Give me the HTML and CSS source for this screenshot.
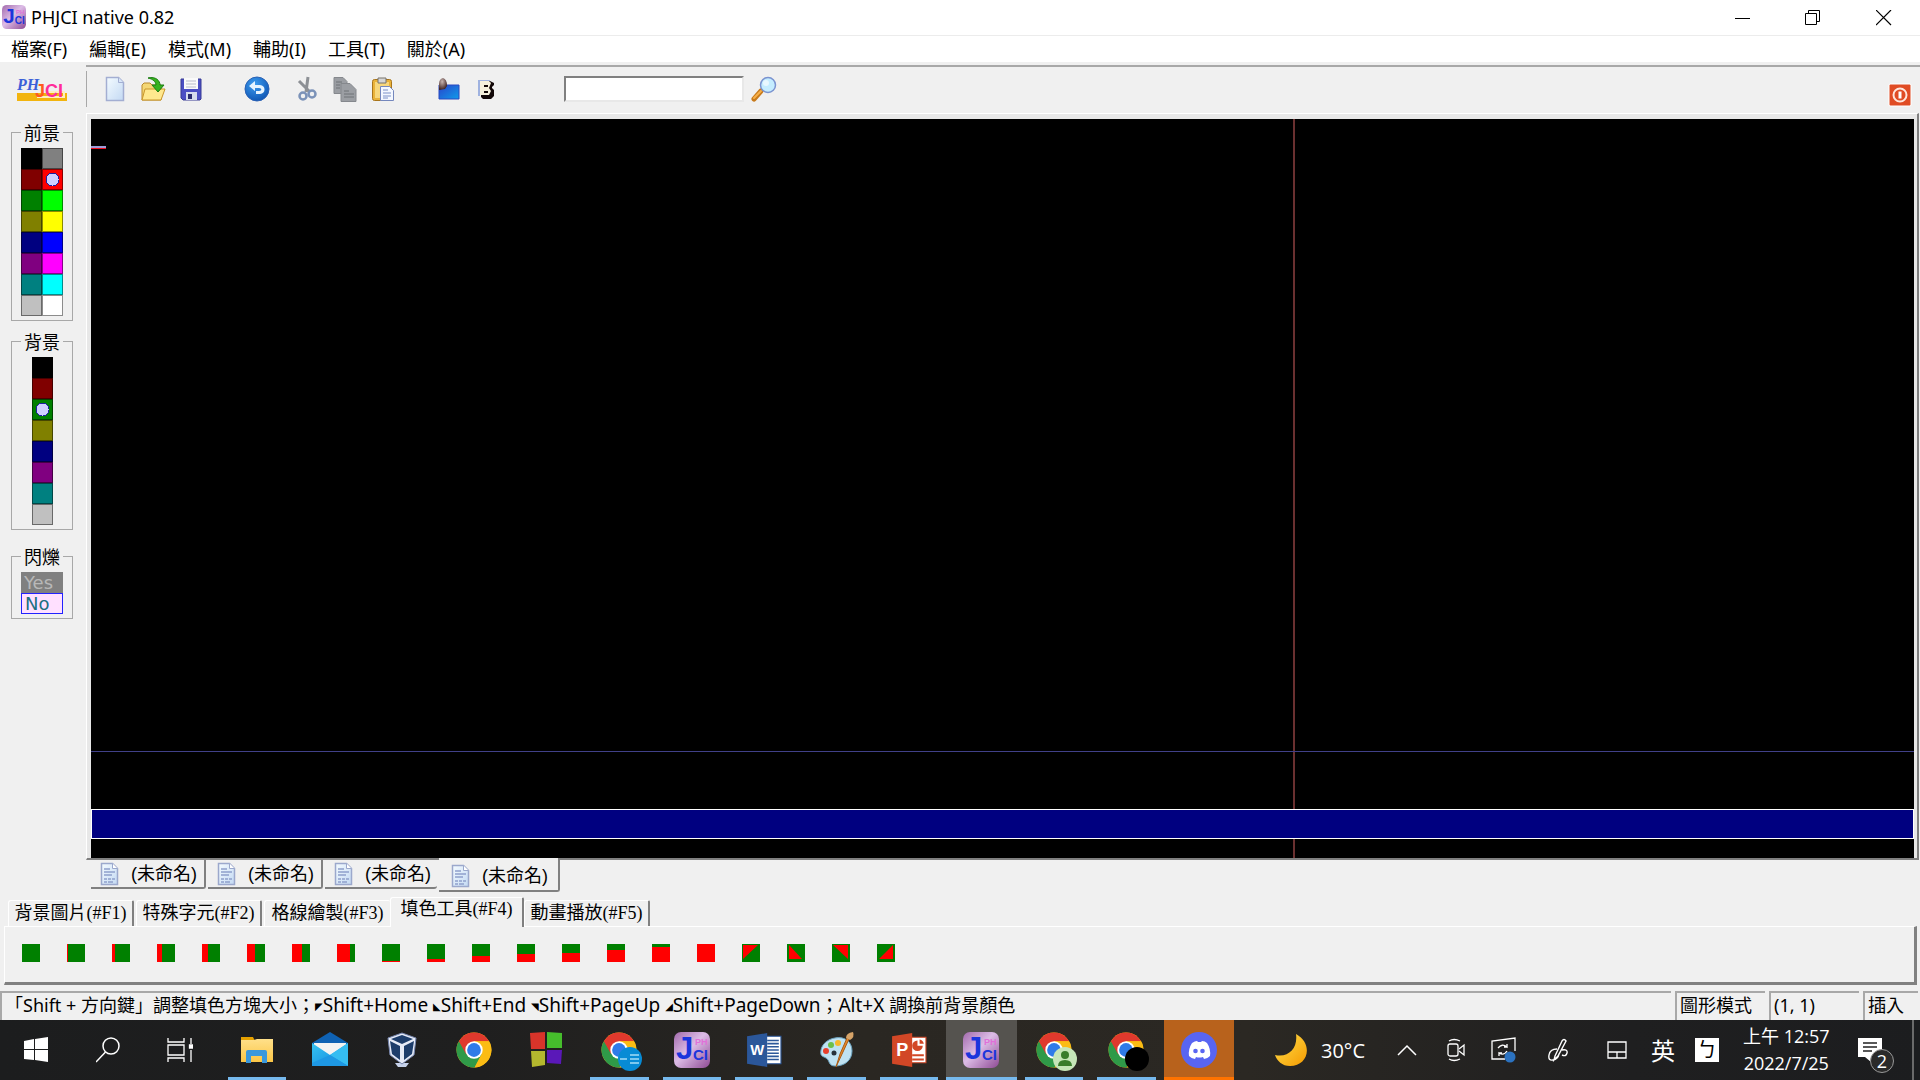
FILE: index.html
```html
<!DOCTYPE html>
<html lang="zh-Hant">
<head>
<meta charset="utf-8">
<title>PHJCI native 0.82</title>
<link rel="stylesheet" href="styles.css">
</head>
<body>
<svg class="defs" aria-hidden="true">
  <defs>
    <linearGradient id="gPurple" x1="0" y1="0" x2="1" y2="1"><stop offset="0" stop-color="#a26aac"/><stop offset=".45" stop-color="#dcbce6"/><stop offset="1" stop-color="#8e4a94"/></linearGradient>
    <linearGradient id="gPaper" x1="0" y1="0" x2="1" y2="1"><stop offset="0" stop-color="#f4fbff"/><stop offset="1" stop-color="#c3d9f3"/></linearGradient>
    <linearGradient id="gBlue" x1="0" y1="0" x2="1" y2="1"><stop offset="0" stop-color="#2a44cc"/><stop offset="1" stop-color="#0e9cea"/></linearGradient>
    <radialGradient id="gUndo" cx=".4" cy=".3" r=".8"><stop offset="0" stop-color="#3d9df0"/><stop offset="1" stop-color="#0a4fae"/></radialGradient>
    <radialGradient id="gBall" cx=".4" cy=".3" r=".7"><stop offset="0" stop-color="#c9b5b0"/><stop offset="1" stop-color="#3c2020"/></radialGradient>
    <linearGradient id="gMoon" x1="0" y1="0" x2="1" y2="1"><stop offset="0" stop-color="#ffe14d"/><stop offset="1" stop-color="#f59a00"/></linearGradient>
    <linearGradient id="gFolder" x1="0" y1="0" x2="0" y2="1"><stop offset="0" stop-color="#ffe08a"/><stop offset="1" stop-color="#fbc646"/></linearGradient>
    <linearGradient id="gMail" x1="0" y1="0" x2="1" y2="1"><stop offset="0" stop-color="#35c3f3"/><stop offset="1" stop-color="#1287dc"/></linearGradient>
  </defs>
  <symbol id="chrome" viewBox="0 0 34 34">
    <circle cx="17" cy="17" r="16.5" fill="#fbbc14"/>
    <path d="M17 17 2.7 8.8A16.5 16.5 0 0 0 17.6 33.5L24.2 21z" fill="#2f9a48"/>
    <path d="M17 17 9.6 21 2.7 8.8A16.5 16.5 0 0 1 31.3 8.8H17z" fill="#e0392d"/>
    <path d="M17 8.8h14.300A16.500 16.500 0 0 1 17.600 33.500L24.200 21z" fill="#fbbc14"/>
    <circle cx="17" cy="17" r="8.200" fill="#fff"/><circle cx="17" cy="17" r="6.500" fill="#2f7be8"/>
  </symbol>
  <symbol id="jci" viewBox="0 0 36 36">
    <rect width="36" height="36" rx="7" fill="url(#gPurple)"/>
    <text x="2" y="27" class="logo-j">J</text><text x="19" y="28" class="logo-ci">CI</text><text x="21" y="13" class="logo-ph">PH</text>
  </symbol>
  <symbol id="doc" viewBox="0 0 20 24">
    <path d="M1.500 1.500h11l5 5v16h-16z" fill="url(#gPaper)" stroke="#9ba8cc" stroke-width="1.500"/>
    <path d="M12.500 1.500v5h5" fill="#fff" stroke="#9ba8cc"/>
    <path d="M4 7h6M4 10h11M4 13h8M4 17h3m1 0h3m1 0h3M4 20h3m1 0h5" stroke="#8fa0cc" stroke-width="1.300"/>
  </symbol>
</svg>

<header class="titlebar">
  <svg class="app-icon" viewBox="0 0 36 36"><use href="#jci"/></svg>
  <h1 class="title">PHJCI native 0.82</h1>
  <button class="win-btn" aria-label="最小化"><svg width="16" height="16"><path d="M0 8.500h15" stroke="#000"/></svg></button>
  <button class="win-btn" aria-label="還原"><svg width="16" height="16" fill="none" stroke="#000"><path d="M.5 3.500h11v11H.5zM3.500 3.500v-3h11v11h-3"/></svg></button>
  <button class="win-btn" aria-label="關閉"><svg width="16" height="16"><path d="M0 0 15 15M15 0 0 15" stroke="#000" stroke-width="1.200"/></svg></button>
</header>

<nav class="menubar">
  <button>檔案(F)</button><button>編輯(E)</button><button>模式(M)</button><button>輔助(I)</button><button>工具(T)</button><button>關於(A)</button>
</nav>

<div class="workspace">
  <aside class="sidebar">
    <svg class="logo" viewBox="0 0 50 25">
      <path d="M0 16h50v8H0z" fill="#f2b40e"/><path d="M30 15h17v5H20" fill="none" stroke="#fdf0c0" stroke-width="2"/>
      <text x="0" y="13" class="logo-script">PH</text>
      <text x="18" y="20" class="logo-word"><tspan fill="#ff5a1e">J</tspan><tspan fill="#ff2d9a">CI</tspan></text>
    </svg>
    <fieldset class="group">
      <legend>前景</legend>
      <div class="swatches two">
        <input type="radio" name="fg" class="c-black" aria-label="黑"><input type="radio" name="fg" class="c-gray" aria-label="灰">
        <input type="radio" name="fg" class="c-maroon" aria-label="暗紅"><input type="radio" name="fg" class="c-red" aria-label="紅" checked>
        <input type="radio" name="fg" class="c-green" aria-label="暗綠"><input type="radio" name="fg" class="c-lime" aria-label="綠">
        <input type="radio" name="fg" class="c-olive" aria-label="暗黃"><input type="radio" name="fg" class="c-yellow" aria-label="黃">
        <input type="radio" name="fg" class="c-navy" aria-label="暗藍"><input type="radio" name="fg" class="c-blue" aria-label="藍">
        <input type="radio" name="fg" class="c-purple" aria-label="暗紫"><input type="radio" name="fg" class="c-magenta" aria-label="紫">
        <input type="radio" name="fg" class="c-teal" aria-label="暗青"><input type="radio" name="fg" class="c-cyan" aria-label="青">
        <input type="radio" name="fg" class="c-silver" aria-label="銀"><input type="radio" name="fg" class="c-white" aria-label="白">
      </div>
    </fieldset>
    <fieldset class="group">
      <legend>背景</legend>
      <div class="swatches">
        <input type="radio" name="bg" class="c-black" aria-label="黑">
        <input type="radio" name="bg" class="c-maroon" aria-label="暗紅">
        <input type="radio" name="bg" class="c-green" aria-label="暗綠" checked>
        <input type="radio" name="bg" class="c-olive" aria-label="暗黃">
        <input type="radio" name="bg" class="c-navy" aria-label="暗藍">
        <input type="radio" name="bg" class="c-purple" aria-label="暗紫">
        <input type="radio" name="bg" class="c-teal" aria-label="暗青">
        <input type="radio" name="bg" class="c-silver" aria-label="銀">
      </div>
    </fieldset>
    <fieldset class="group blink-group">
      <legend>閃爍</legend>
      <div class="blink">
        <button class="blink-yes">Yes</button>
        <button class="blink-no" aria-pressed="true">No</button>
      </div>
    </fieldset>
  </aside>

  <main class="editor">
    <div class="toolbar">
      <button class="tool" aria-label="新檔"><svg viewBox="0 0 26 26"><path d="M4.500 1.500h12l5 5v18h-17z" fill="url(#gPaper)" stroke="#a3aed2" stroke-width="1.500"/><path d="M16.500 1.500v5h5" fill="#d8e6f8" stroke="#a3aed2"/></svg></button>
      <button class="tool" aria-label="開啟"><svg viewBox="0 0 26 26"><path d="M2 24V9l2-2h6l2 2h9v15z" fill="#f4d774" stroke="#b8892a"/><path d="M2 24l3-11h20l-4 11z" fill="#ffe88e" stroke="#c8952a"/><path d="M8 2c8-2 12 3 12 7h4l-6 7-6-7h4c0-3-3-6-8-7z" fill="#35b31e" stroke="#1c7c12"/></svg></button>
      <button class="tool" aria-label="儲存"><svg viewBox="0 0 26 26"><path d="M3 3h20v20l-1 1H5l-2-2z" fill="#4b4fc4" stroke="#383a94"/><path d="M6 2h14v11H6z" fill="#fafafa"/><path d="M8 5h10M8 8h10M8 11h10" stroke="#b9bccb"/><path d="M8 16h11v8H8z" fill="#d6dcec"/><path d="M10 18h4v5h-4z" fill="#2a2c70"/></svg></button>
      <button class="tool undo" aria-label="復原"><svg viewBox="0 0 26 26"><circle cx="13" cy="13" r="12" fill="url(#gUndo)" stroke="#2c62b4"/><path d="M11 5v4h5c6 0 6 9 0 9h-4v-3h3c3 0 3-3 0-3h-4v3l-6-5z" fill="#e6f4ff"/></svg></button>
      <button class="tool cut" aria-label="剪下"><svg viewBox="0 0 26 26" fill="none"><path d="M5 5 16 16M14 1 12 16" stroke="#8d9095" stroke-width="3"/><circle cx="9" cy="20" r="3.500" stroke="#7b92b8" stroke-width="2.500"/><circle cx="18" cy="18" r="3.500" stroke="#7b92b8" stroke-width="2.500"/></svg></button>
      <button class="tool" aria-label="複製"><svg viewBox="0 0 26 26" fill="#9b9ea3" stroke="#85888d"><path d="M2 1.500h9l4 4v12H2z"/><path d="M9 7.500h9l6 6v12H9z"/><path d="M4 6h6M4 9h4M4 12h4M12 15h5M12 18h10M12 21h10" stroke="#6f7277"/></svg></button>
      <button class="tool paste" aria-label="貼上"><svg viewBox="0 0 26 26"><rect x="2.500" y="3.500" width="19" height="21" rx="2" fill="#e9b23a" stroke="#a8751c"/><path d="M5 6h14v16H5z" fill="#f7d77c"/><path d="M8 2h8v5H8z" fill="#d6d6d6" stroke="#77736a"/><path d="M10.500 10.500h9l4 4v10h-13z" fill="#f4f8ff" stroke="#7487bd"/><path d="M13 14h5M13 17h8M13 20h8M13 22h5" stroke="#7d92c8"/></svg></button>
      <button class="tool" aria-label="背景"><svg viewBox="0 0 26 26"><path d="M3 9h20v14H3z" fill="url(#gBlue)" stroke="#2b48c0"/><path d="M3 14V8q0-5 4-6 4 1 4 8l-2 3z" fill="url(#gBall)"/></svg></button>
      <button class="tool" aria-label="粗體"><svg viewBox="0 0 26 26"><path d="M4 4h12v4H6v12H4z" fill="#9fb2e0"/><path d="M7 5h9l4 2v2l-2 2v1l2 2v6l-3 3H9l-2-2z" fill="#120808"/><path d="M6 5h9l2 2-2 5 2 3-2 4H6zm4 4v2h4V9zm0 6v2h4v-2z" fill="#f5f0dc"/></svg></button>
      <input class="find" type="text" aria-label="尋找">
      <button class="tool" aria-label="搜尋"><svg viewBox="0 0 26 26"><path d="M10 15 3 23" stroke="#c77a1c" stroke-width="5" stroke-linecap="round"/><path d="M10 15 3 22" stroke="#f7b04a" stroke-width="2" stroke-linecap="round"/><circle cx="17" cy="9" r="7.500" fill="#c5edff" stroke="#7a93d0" stroke-width="1.500"/><circle cx="15" cy="7" r="3" fill="#fff" opacity=".6"/></svg></button>
      <button class="power" aria-label="關閉文件"><svg viewBox="0 0 24 24"><rect x=".5" y=".5" width="23" height="23" rx="2" fill="#fff"/><rect x="1.500" y="1.500" width="21" height="21" rx="1" fill="#e04c24"/><circle cx="12" cy="12" r="6.500" fill="none" stroke="#ffe6dc" stroke-width="2"/><path d="M12 8.500v7" stroke="#fff" stroke-width="3"/></svg></button>
    </div>
    <div class="frame">
      <div class="canvas">
        <div class="guide-v"></div>
        <div class="guide-h"></div>
        <div class="caret"></div>
        <div class="line-bar"></div>
      </div>
    </div>
    <div class="doc-tabs" role="tablist">
      <button role="tab"><svg viewBox="0 0 20 24"><use href="#doc"/></svg>(未命名)</button>
      <button role="tab"><svg viewBox="0 0 20 24"><use href="#doc"/></svg>(未命名)</button>
      <button role="tab"><svg viewBox="0 0 20 24"><use href="#doc"/></svg>(未命名)</button>
      <button role="tab" class="active" aria-selected="true"><svg viewBox="0 0 20 24"><use href="#doc"/></svg>(未命名)</button>
    </div>
  </main>
</div>

<section class="tools">
  <div class="tool-tabs" role="tablist">
    <button role="tab">背景圖片(#F1)</button>
    <button role="tab">特殊字元(#F2)</button>
    <button role="tab">格線繪製(#F3)</button>
    <button role="tab" class="active" aria-selected="true">填色工具(#F4)</button>
    <button role="tab">動畫播放(#F5)</button>
  </div>
  <div class="fill-panel">
    <button aria-label="左 0/8"></button>
    <button aria-label="左 1/8"><i class="left" style="width:1px"></i></button>
    <button aria-label="左 2/8"><i class="left" style="width:3px"></i></button>
    <button aria-label="左 3/8"><i class="left" style="width:5px"></i></button>
    <button aria-label="左 4/8"><i class="left" style="width:6px"></i></button>
    <button aria-label="左 5/8"><i class="left" style="width:8px"></i></button>
    <button aria-label="左 6/8"><i class="left" style="width:10px"></i></button>
    <button aria-label="左 7/8"><i class="left" style="width:13px"></i></button>
    <button aria-label="下 1/8"><i class="low" style="height:1px"></i></button>
    <button aria-label="下 2/8"><i class="low" style="height:3px"></i></button>
    <button aria-label="下 3/8"><i class="low" style="height:6px"></i></button>
    <button aria-label="下 4/8"><i class="low" style="height:8px"></i></button>
    <button aria-label="下 5/8"><i class="low" style="height:9px"></i></button>
    <button aria-label="下 6/8"><i class="low" style="height:12px"></i></button>
    <button aria-label="下 7/8"><i class="low" style="height:15px"></i></button>
    <button aria-label="全滿"><i class="low" style="height:18px"></i></button>
    <button aria-label="左上"><svg viewBox="0 0 18 18"><path d="M1 1h15L1 15z" fill="red"/></svg></button>
    <button aria-label="左下"><svg viewBox="0 0 18 18"><path d="M2 1v14h13z" fill="red"/></svg></button>
    <button aria-label="右上"><svg viewBox="0 0 18 18"><path d="M1 1h15v14z" fill="red"/></svg></button>
    <button aria-label="右下"><svg viewBox="0 0 18 18"><path d="M16 1v14H2z" fill="red"/></svg></button>
  </div>
</section>

<footer class="status">
  <span class="hint">「Shift + 方向鍵」調整填色方塊大小；<small>◤</small><kbd>Shift+Home </kbd><small>◣</small><kbd>Shift+End </kbd><small>◥</small><kbd>Shift+PageUp </kbd><small>◢</small><kbd>Shift+PageDown</kbd>；<kbd>Alt+X </kbd>調換前背景顏色</span>
  <span class="mode">圖形模式</span>
  <span class="mode">(1, 1)</span>
  <span class="insert">插入</span>
</footer>

<div class="taskbar">
  <div class="system">
    <button aria-label="開始"><svg width="24" height="26" viewBox="0 0 24 26" fill="#fff"><path d="M0 4l10-2v10H0zM11 2l13-2v12H11zM0 13h10v10L0 22zM11 13h13v12l-13-2z"/></svg></button>
    <button aria-label="搜尋"><svg width="24" height="26" viewBox="0 0 24 26" fill="none" stroke="#fff" stroke-width="1.500"><circle cx="15" cy="9" r="8"/><path d="M9.500 15 0 25"/></svg></button>
    <button aria-label="工作檢視"><svg width="26" height="26" viewBox="0 0 26 26" fill="none" stroke="#fff" stroke-width="1.300"><path d="M1 1v4h16V1M1 25v-4h16v4M1 8h16v10H1zM24 1v6M24 13v12"/><path d="M22.500 8h3v3h-3z" fill="#fff"/></svg></button>
  </div>
  <div class="apps">
    <button class="open" aria-label="檔案總管"><svg viewBox="0 0 36 36"><path d="M2 5h12l2 4H2z" fill="#e5a100"/><path d="M2 8h13l3-1h16v23H2z" fill="url(#gFolder)"/><path d="M7 31V20q0-2 2-2h17q2 0 2 2v11h-5v-7h-11v7z" fill="#3a98dc"/></svg></button>
    <button aria-label="郵件"><svg viewBox="0 0 36 36"><path d="M0 11 18 0l18 11v4H0z" fill="#0f62b4"/><path d="M2 11h32v12H2z" fill="#f3f3f3"/><path d="M0 11l18 12 18-12v23H0z" fill="url(#gMail)"/><path d="M36 11v23L18 23z" fill="#35bdf2"/><path d="M0 34l0-3L18 23l18 11z" fill="#1e98e4"/></svg></button>
    <button aria-label="VirtualBox"><svg viewBox="0 0 36 36"><path d="M11 31h14l-3 4h-8z" fill="#c6d2ea"/><path d="M18 1l14 5-2 17-12 9L6 23 4 6z" fill="#e6ebf7" stroke="#7585ad"/><path d="M18 3l11 4-11 5L7 7zM6 9l10 5v14L8 22zM30 9l-10 5v14l8-6z" fill="#1d3d6b"/></svg></button>
    <button aria-label="Chrome"><svg viewBox="0 0 34 34"><use href="#chrome"/></svg></button>
    <button aria-label="方塊"><svg viewBox="0 0 36 36"><path d="M1 1l15-1v17H2z" fill="#d8342a"/><path d="M18 0l15 1v15H18z" fill="#46be2c"/><path d="M2 19h14v14L3 35z" fill="#b4b82e"/><path d="M18 18h15l-1 14-14-1z" fill="#5a18b8"/></svg></button>
    <button class="open" aria-label="Chrome 設定檔一"><svg viewBox="0 0 34 34"><use href="#chrome"/></svg><svg class="badge" viewBox="0 0 24 24"><circle cx="12" cy="12" r="12" fill="#078bd5"/><path d="M2 12h7M12 8h9M12 12h9M12 16h9" stroke="#7cc8ee" stroke-width="2"/></svg></button>
    <button class="open" aria-label="PHJCI"><svg viewBox="0 0 36 36"><use href="#jci"/></svg></button>
    <button class="open" aria-label="Word"><svg viewBox="0 0 34 34"><path d="M18 4h15v26H18z" fill="#fff" stroke="#2b579a"/><path d="M20 8h11M20 11h11M20 14h11M20 17h11M20 20h11M20 23h11M20 26h11" stroke="#2b579a" stroke-width="1.500"/><path d="M1 4 20 1v32L1 30z" fill="#2b579a"/><text x="4" y="22" class="office w">W</text></svg></button>
    <button class="open" aria-label="小畫家"><svg viewBox="0 0 36 36"><path d="M16 6c10-2 17 4 17 13S26 34 16 34c-7 0-5-6-9-8S1 24 2 18C3 12 9 7 16 6z" fill="#bfe2f2" stroke="#6ba3c0"/><circle cx="7" cy="19" r="3" fill="#e8402c"/><circle cx="12" cy="13" r="3" fill="#6cc04a"/><circle cx="19" cy="11" r="3" fill="#f6b82c"/><circle cx="15" cy="21" r="2.500" fill="#26313a"/><path d="M30 7 17 35l4-13 7-16z" fill="#e88a2c" stroke="#a85b14"/><path d="M27 6q0-5 7-6 2 5-3 8z" fill="#d6a368"/></svg></button>
    <button class="open" aria-label="PowerPoint"><svg viewBox="0 0 34 34"><path d="M17 5h16v24H17z" fill="#fff" stroke="#d24726"/><path d="M25 8a5 5 0 1 0 5 5h-5zM27 7a5 5 0 0 1 4 4h-4zM20 21h11v2H20zM20 25h11v2H20z" fill="#d24726"/><path d="M1 4 20 1v32L1 30z" fill="#d24726"/><text x="5" y="23" class="office">P</text></svg></button>
    <button class="open current" aria-label="PHJCI"><svg viewBox="0 0 36 36"><use href="#jci"/></svg></button>
    <button class="open" aria-label="Chrome 設定檔二"><svg viewBox="0 0 34 34"><use href="#chrome"/></svg><svg class="badge" viewBox="0 0 24 24"><circle cx="12" cy="12" r="12" fill="#c6e6b8"/><circle cx="12" cy="8" r="4" fill="#3a7d2c"/><path d="M5 19q0-6 7-6t7 6z" fill="#3a7d2c"/></svg></button>
    <button class="open" aria-label="Chrome 設定檔三"><svg viewBox="0 0 34 34"><use href="#chrome"/></svg><svg class="badge" viewBox="0 0 24 24"><circle cx="12" cy="12" r="12" fill="#000"/></svg></button>
    <button class="open alert" aria-label="Discord"><svg viewBox="0 0 36 36"><circle cx="18" cy="18" r="18" fill="#5865f2"/><path d="M11 11q3-2 5-2l1 1h3l1-1q3 0 5 2 4 6 3 13-3 3-6 3l-1-2q-4 1-7 0l-1 2q-3 0-6-3-1-7 3-13z" fill="#fff"/><circle cx="14.500" cy="19" r="2.300" fill="#5865f2"/><circle cx="21.500" cy="19" r="2.300" fill="#5865f2"/></svg></button>
  </div>
  <div class="tray">
    <button class="weather"><svg width="34" height="34" viewBox="0 0 34 34"><path d="M22 1c18 10 12 32-6 32C8 33 3 28 1 22c14 3 23-7 21-21z" fill="url(#gMoon)"/></svg>30°C</button>
    <button class="chevron" aria-label="顯示隱藏的圖示"><svg width="20" height="12" fill="none" stroke="#fff" stroke-width="1.500"><path d="M1 11 10 2l9 9"/></svg></button>
    <button class="cam" aria-label="立即開會"><svg width="18" height="24" viewBox="0 0 18 24" fill="none" stroke="#fff" stroke-width="1.300"><rect x="1" y="6" width="10" height="12" rx="2"/><path d="M12 11l5-4v10l-5-4M2 3q5-3 11 0M2 21q5 3 11 0"/></svg></button>
    <button class="sync" aria-label="更新"><svg width="26" height="26" viewBox="0 0 26 26" fill="none" stroke="#fff" stroke-width="1.300"><path d="M14 22H1V4l23-3v13M7 11q4-5 9-1V7m0 3h-3M16 14q-3 5-8 2v3m0-3h3"/><circle cx="19" cy="20" r="5.500" fill="#2b72c0" stroke="none"/></svg></button>
    <button class="pen" aria-label="手寫筆"><svg width="22" height="24" viewBox="0 0 22 24" fill="none" stroke="#fff" stroke-width="1.400"><path d="M8 18 15 3q2-3 4 0l-8 15-4 4zM10 11q-7 0-8 6t4 5 6-6M15 12q6-1 5 3t-5 2"/></svg></button>
    <button class="pad" aria-label="觸控板"><svg width="20" height="18" viewBox="0 0 20 18" fill="none" stroke="#fff" stroke-width="1.300"><path d="M1 1h18v16H1zM1 11h18M10 11v6"/></svg></button>
    <button class="lang">英</button>
    <button class="ime"><span>ㄅ</span></button>
    <button class="clock"><span>上午 12:57</span><span>2022/7/25</span></button>
    <button class="notice" aria-label="通知"><svg width="24" height="24" viewBox="0 0 24 24"><path d="M0 0h24v19H13v5l-6-5H0z" fill="#fff"/><path d="M5 5h14M5 9h14M5 13h9" stroke="#222" stroke-width="1.300"/></svg><span class="count">2</span></button>
    <button class="desktop" aria-label="顯示桌面"></button>
  </div>
</div>
</body>
</html>
```
FILE: styles.css
```css
* { box-sizing: border-box; }
body {
  margin: 0;
  min-height: 100vh;
  display: flex;
  flex-direction: column;
  background: #f0f0f0;
  color: #000;
  font: 18px/24px "Noto Sans", "Noto Sans CJK TC", sans-serif;
}
button {
  margin: 0;
  padding: 0;
  border: 0;
  background: none;
  color: inherit;
  font: inherit;
  white-space: nowrap;
}
svg { display: block; }
.defs { position: absolute; width: 0; height: 0; }

.logo-j { font: 900 31px "Liberation Sans", sans-serif; fill: #1c35dc; }
.logo-ci { font: 900 15px "Liberation Sans", sans-serif; fill: #1c35dc; }
.logo-ph { font: 700 9px "Liberation Sans", sans-serif; fill: #e070d8; }
.logo-script { font: italic 700 16px "Liberation Serif", serif; fill: #3c60d8; }
.logo-word { font: 900 18px "Liberation Sans", sans-serif; }
.office { font: 700 17px "Liberation Sans", sans-serif; fill: #fff; }
.office.w { font-size: 14px; }

.titlebar { display: flex; height: 36px; background: #fff; border-bottom: 1px solid #ececec; }
.app-icon { width: 24px; height: 24px; margin: 5px 5px 0 2px; }
.title { flex: 1; margin: 0; font: 400 18px/34px "Noto Sans", sans-serif; }
.win-btn { width: 70px; display: flex; align-items: center; justify-content: center; }
.win-btn:last-child { width: 72px; }

.menubar { display: flex; gap: 22px; height: 26px; padding-left: 11px; background: #fff; line-height: 26px; }

.workspace { flex: 1; display: flex; }
.sidebar { width: 86px; padding: 15px 13px 0 11px; }
.logo { width: 50px; height: 25px; margin: 0 0 18px 6px; }
.group {
  min-width: 0;
  margin: 0 0 8px;
  padding: 4px 0 4px;
  border: 1px solid #a8a8a8;
  font: 18px/24px "Noto Sans CJK TC", sans-serif;
}
.group legend { margin: 0 auto; padding: 0 3px; }
.blink-group { margin-top: 14px; }
.swatches { display: grid; grid-template-columns: 21px; justify-content: center; }
.swatches.two { grid-template-columns: 21px 21px; }
.swatches input {
  appearance: none;
  width: 21px;
  height: 21px;
  margin: 0;
  border: 1px solid rgba(0, 0, 0, .45);
}
.swatches input:checked {
  background-image: radial-gradient(circle, #d0d0ff 6px, #2020a0 6px, #2020a0 7px, transparent 7px);
}
.c-black { background-color: #000; }
.c-gray { background-color: #808080; }
.c-maroon { background-color: #800000; }
.c-red { background-color: #f00; }
.c-green { background-color: #008000; }
.c-lime { background-color: #0f0; }
.c-olive { background-color: #808000; }
.c-yellow { background-color: #ff0; }
.c-navy { background-color: #000080; }
.c-blue { background-color: #00f; }
.c-purple { background-color: #800080; }
.c-magenta { background-color: #f0f; }
.c-teal { background-color: #008080; }
.c-cyan { background-color: #0ff; }
.c-silver { background-color: #c0c0c0; }
.c-white { background-color: #fff; }
.blink { display: grid; grid-template-rows: 21px 21px; justify-content: center; font: 18px/20px "DejaVu Sans", sans-serif; }
.blink button { width: 42px; padding-left: 3px; text-align: left; }
.blink-yes { background: #808080; color: #b8b8b8; }
.blink .blink-no { border: 1px solid #22f; background: #ffe0ff; color: #207080; line-height: 18px; }

.editor { flex: 1; min-width: 0; display: flex; flex-direction: column; padding-top: 3px; }
.toolbar {
  display: flex;
  align-items: center;
  height: 48px;
  padding: 0 8px 2px 16px;
  gap: 10px;
  border-top: 2px solid #a8a8a8;
  background: linear-gradient(#a8a8a8, #a8a8a8) 0 4px / 1px 36px no-repeat;
}
.tool { width: 28px; height: 26px; }
.tool svg { width: 26px; height: 26px; }
.undo { margin-left: 28px; }
.cut { margin-left: 12px; }
.paste { margin-right: 28px; }
.find {
  width: 180px;
  height: 26px;
  margin-left: 52px;
  margin-right: -3px;
  border: 2px solid #808080;
  border-right-color: #e8e8e8;
  border-bottom-color: #e8e8e8;
  background: #fff;
  font: inherit;
}
.power { width: 24px; height: 24px; margin: 12px 0 0 auto; }
.frame {
  flex: 1;
  display: flex;
  margin: 0 1px 0 0;
  padding: 5px 3px 0 4px;
  border: 1px solid #fff;
  border-right: 2px solid #808080;
  border-bottom: 2px solid #808080;
  background: #e8e8e8;
}
.canvas { position: relative; flex: 1; display: flex; flex-direction: column; justify-content: flex-end; padding-bottom: 19px; background: #000; }
.guide-v { position: absolute; top: 0; bottom: 0; left: calc(66% - 1px); width: 2px; background: #6a3030; }
.guide-h { position: absolute; left: 0; right: 0; bottom: 106px; height: 1px; background: #404088; }
.caret { position: absolute; left: 0; top: 27px; width: 15px; height: 3px; border-top: 2px solid #9c9cd8; background: #f01020; }
.line-bar { position: relative; height: 30px; border: 1px solid #fff; background: #000080; }

.doc-tabs { display: flex; gap: 2px; height: 31px; padding-left: 5px; font: 18px/24px "Liberation Sans", "Noto Sans CJK TC", sans-serif; }
.doc-tabs button {
  display: flex;
  align-items: center;
  gap: 11px;
  height: 29px;
  width: 115px;
  padding-left: 9px;
  border: solid #808080;
  border-width: 0 2px 2px 0;
  border-radius: 0 0 3px 0;
}
.doc-tabs button:nth-child(3) { width: 112px; border-right: 0; }
.doc-tabs .active { width: 121px; height: 34px; margin-top: -2px; padding: 4px 0 0 12px; background: #f0f0f0; }
.doc-tabs svg { width: 20px; height: 24px; }

.tools { padding: 7px 3px 6px 4px; }
.tool-tabs { display: flex; align-items: flex-end; gap: 2px; height: 28px; padding-left: 4px; font: 18px/22px "Liberation Serif", "Noto Sans CJK TC", serif; }
.tool-tabs button {
  width: 126px;
  height: 26px;
  padding-bottom: 2px;
  border: 1px solid #fff;
  border-right: 2px solid #808080;
  border-bottom: 0;
  border-radius: 3px 2px 0 0;
}
.tool-tabs button:nth-child(3) { border-right: 0; }
.tool-tabs .active { width: 134px; height: 30px; margin: 0 -2px -1px -2px; padding-bottom: 7px; background: #f0f0f0; }
.fill-panel {
  display: flex;
  gap: 27px;
  height: 59px;
  padding: 17px;
  border: 1px solid #fff;
  border-right: 3px solid #808080;
  border-bottom: 3px solid #808080;
}
.fill-panel button { display: flex; width: 18px; height: 18px; background: #008000; }
.fill-panel i { background: #f00; }
.fill-panel .left { height: 18px; }
.fill-panel .low { width: 18px; align-self: flex-end; }
.fill-panel svg { width: 18px; height: 18px; }

.status { display: flex; gap: 4px; height: 29px; padding-right: 2px; line-height: 24px; white-space: nowrap; }
.status > span { padding-left: 3px; border: 1px solid #a8a8a8; border-width: 2px 0 0 2px; }
.status .hint { flex: 1; overflow: hidden; }
.status .mode { width: 90px; }
.status .insert { width: 55px; }
.status small { font: 10px/10px "DejaVu Sans", sans-serif; vertical-align: 2px; }
.status kbd { font: 19px/20px "Noto Sans", sans-serif; }

.taskbar {
  display: flex;
  height: 60px;
  background: linear-gradient(90deg, #1c1d1e, #1f1f1f 25%, #2a2722 45%, #2b2823 65%, #1f1f20 85%, #1c1d1f);
  color: #fff;
  font: 20px/27px "Open Sans", "Noto Sans CJK TC", sans-serif;
}
.system { display: flex; padding-right: 5px; }
.system button { width: 72px; display: grid; place-items: center; }
.apps { display: grid; grid-template-columns: repeat(14, 1fr); width: 1014px; }
.apps button { position: relative; display: grid; place-items: center; margin: 0 1px; }
.apps svg { width: 36px; height: 36px; }
.apps .badge { position: absolute; left: 34px; top: 27px; width: 24px; height: 24px; }
.apps .open::after { content: ""; position: absolute; left: 6px; right: 6px; bottom: 0; height: 3px; background: #76b9ed; }
.apps .current { background: #55534f; }
.apps .current::after { left: 0; right: 0; }
.apps .alert { background: #b8621c; }
.apps .open.alert::after { left: 0; right: 0; background: #ff7300; }
.tray { flex: 1; display: flex; align-items: center; justify-content: flex-end; }
.weather { display: flex; align-items: center; gap: 13px; margin-right: 32px; }
.chevron { margin-right: 30px; }
.cam { margin-right: 26px; }
.sync { margin-right: 30px; }
.pen { margin-right: 38px; }
.pad { margin-right: 24px; }
.lang { font-size: 24px; margin-right: 20px; }
.ime { width: 24px; height: 24px; margin-right: 24px; background: #fff; color: #000; font-size: 20px; line-height: 22px; }
.clock { display: grid; width: 86px; margin-right: 29px; text-align: center; font-size: 18px; }
.notice { position: relative; margin-right: 30px; }
.count {
  position: absolute;
  left: 12px;
  top: 11px;
  width: 24px;
  height: 24px;
  border: 1px solid #999;
  border-radius: 50%;
  background: #2a2a2a;
  font-size: 18px;
  line-height: 22px;
  text-align: center;
}
.desktop { width: 8px; align-self: stretch; border-left: 2px solid #6a6a6a; }
```
